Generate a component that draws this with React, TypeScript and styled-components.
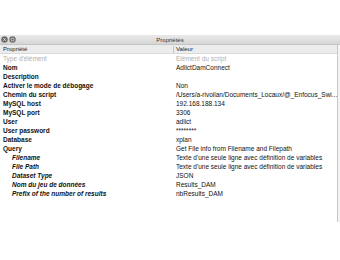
import React from 'react';
import styled, { createGlobalStyle } from 'styled-components';

const GlobalStyle = createGlobalStyle`
  html, body {
    margin: 0;
    padding: 0;
    background: #ffffff;
    font-family: 'Liberation Sans', Arial, sans-serif;
  }
`;

type Row = {
  label: string;
  value: string;
  muted?: boolean;
  child?: boolean;
};

const rows: Row[] = [
  { label: "Type d'élément", value: 'Elément du script', muted: true },
  { label: 'Nom', value: 'AdlictDamConnect' },
  { label: 'Description', value: '' },
  { label: 'Activer le mode de débogage', value: 'Non' },
  { label: 'Chemin du script', value: '/Users/a-rivoilan/Documents_Locaux/@_Enfocus_Swi...' },
  { label: 'MySQL host', value: '192.168.188.134' },
  { label: 'MySQL port', value: '3306' },
  { label: 'User', value: 'adlict' },
  { label: 'User password', value: '********' },
  { label: 'Database', value: 'xplan' },
  { label: 'Query', value: 'Get File info from Filename and Filepath' },
  { label: 'Filename', value: "Texte d'une seule ligne avec définition de variables", child: true },
  { label: 'File Path', value: "Texte d'une seule ligne avec définition de variables", child: true },
  { label: 'Dataset Type', value: 'JSON', child: true },
  { label: 'Nom du jeu de données', value: 'Results_DAM', child: true },
  { label: 'Prefix of the number of results', value: 'nbResults_DAM', child: true },
];

const Page = styled.div`
  padding-top: 35px;
  width: 340px;
  height: 260px;
  box-sizing: border-box;
`;

const Window = styled.div`
  display: flex;
  flex-direction: column;
  width: 340px;
`;

const TitleBar = styled.div`
  position: relative;
  height: 10px;
  display: flex;
  align-items: center;
  justify-content: center;
  background: linear-gradient(#e9e9e9, #d6d6d6);
  border-bottom: 1px solid #c4c4c4;
  box-sizing: border-box;
  font-size: 6px;
  color: #333;
`;

const Controls = styled.div`
  position: absolute;
  left: 1px;
  top: 1px;
  display: flex;
  gap: 1px;
`;

const Body = styled.div`
  display: flex;
  height: 177px;
`;

const Table = styled.div`
  flex: 1;
  display: flex;
  flex-direction: column;
`;

const Scroller = styled.div`
  width: 3px;
  border-left: 1px solid #c8c8c8;
  background: #f4f4f4;
`;

const Header = styled.div`
  display: grid;
  grid-template-columns: 173px 1fr;
  height: 9px;
  align-items: center;
  background: #ececec;
  border-bottom: 1px solid #dadada;
  box-sizing: border-box;
  font-size: 6px;
  color: #222;
`;

const HeadCell = styled.div<{ $sep?: boolean }>`
  padding-left: ${(p) => (p.$sep ? '2px' : '3px')};
  border-left: ${(p) => (p.$sep ? '1px solid #c6c6c6' : 'none')};
  line-height: 7px;
`;

const Line = styled.div`
  display: grid;
  grid-template-columns: 176px 1fr;
  height: 9px;
  align-items: center;
  font-size: 6.5px;
  line-height: 9px;
`;

const Label = styled.div<{ $muted?: boolean; $child?: boolean }>`
  padding-left: ${(p) => (p.$child ? '12px' : '3px')};
  font-weight: ${(p) => (p.$muted ? 'normal' : 'bold')};
  font-style: ${(p) => (p.$child ? 'italic' : 'normal')};
  color: ${(p) => (p.$muted ? '#b0b0b0' : '#111')};
  white-space: nowrap;
`;

const Value = styled.div<{ $muted?: boolean }>`
  color: ${(p) => (p.$muted ? '#b0b0b0' : '#111')};
  white-space: nowrap;
`;

const WinButton = ({ kind }: { kind: 'close' | 'min' }) => (
  <svg width="7" height="7" viewBox="0 0 14 14">
    <circle cx="7" cy="7" r="6.5" fill="#6d6d6d" />
    {kind === 'close' ? (
      <path d="M4.5 4.5 L9.5 9.5 M9.5 4.5 L4.5 9.5" stroke="#e8e8e8" strokeWidth="1.6" />
    ) : (
      <circle cx="7" cy="7" r="3" fill="none" stroke="#e8e8e8" strokeWidth="1.4" />
    )}
  </svg>
);

export default function App() {
  return (
    <Page>
      <GlobalStyle />
      <Window>
        <TitleBar>
          <Controls>
            <WinButton kind="close" />
            <WinButton kind="min" />
          </Controls>
          Propriétés
        </TitleBar>
        <Body>
          <Table>
            <Header>
              <HeadCell>Propriété</HeadCell>
              <HeadCell $sep>Valeur</HeadCell>
            </Header>
            {rows.map((r) => (
              <Line key={r.label}>
                <Label $muted={r.muted} $child={r.child}>
                  {r.label}
                </Label>
                <Value $muted={r.muted}>{r.value}</Value>
              </Line>
            ))}
          </Table>
          <Scroller />
        </Body>
      </Window>
    </Page>
  );
}
